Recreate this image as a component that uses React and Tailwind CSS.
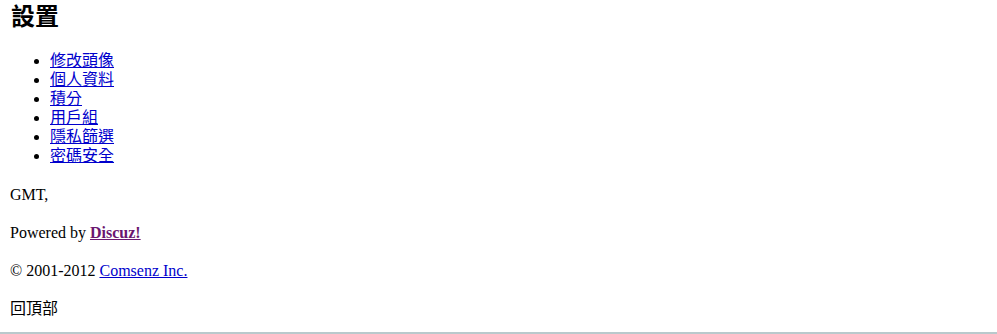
import React from "react";

const FONT = { fontFamily: '"Liberation Serif", "Noto Sans CJK TC", serif' };

const MENU = ["修改頭像", "個人資料", "積分", "用戶組", "隱私篩選", "密碼安全"];

export default function App() {
  return (
    <div className="h-[334px] w-[997px] bg-white text-black border-b-2 border-[#b9c9cc] overflow-hidden" style={FONT}>
      <div className="px-[10px] pt-[3px]">
        <h2 className="text-[24px] font-bold leading-[28px] pl-px">設置</h2>
        <ul className="mt-[20px] list-disc pl-[40px] text-[16px] leading-[19px]">
          {MENU.map((item) => (
            <li key={item}>
              <a href="#" className="text-[#0000cc] underline">
                {item}
              </a>
            </li>
          ))}
        </ul>
        <div className="mt-[20px] flex flex-col gap-[19px] text-[16px] leading-[19px]">
          <p>GMT,</p>
          <p>
            Powered by{" "}
            <strong>
              <a href="#" className="text-[#6a1670] underline">
                Discuz!
              </a>
            </strong>
          </p>
          <p>
            © 2001-2012{" "}
            <a href="#" className="text-[#0000cc] underline">
              Comsenz Inc.
            </a>
          </p>
          <p>回頂部</p>
        </div>
      </div>
    </div>
  );
}
